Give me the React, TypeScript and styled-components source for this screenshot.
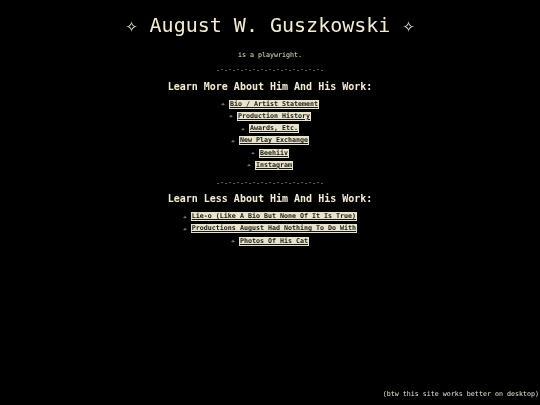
import React from "react";
import styled, { createGlobalStyle } from "styled-components";

const Global = createGlobalStyle`
  html, body {
    margin: 0;
    padding: 0;
    background: #000;
  }
  body {
    font-family: "DejaVu Sans Mono", "Liberation Mono", monospace;
    color: #f3ecd2;
  }
`;

const Page = styled.div`
  min-height: 405px;
  display: flex;
  flex-direction: column;
  align-items: center;
  text-align: center;
  box-sizing: border-box;
  will-change: transform;
`;

const Title = styled.h1`
  margin: 10px 0 0;
  font-size: 20px;
  line-height: 30px;
  font-weight: normal;
  white-space: pre;
`;

const Tagline = styled.p`
  margin: 10px 0 0;
  font-size: 6.67px;
  line-height: 10px;
  color: #e6e0ca;
`;

const Divider = styled.div<{ $top: number }>`
  margin-top: ${(p) => p.$top}px;
  font-size: 6.67px;
  line-height: 10px;
  color: #c8c2ac;
  white-space: pre;
`;

const Heading = styled.h2<{ $top: number }>`
  margin: ${(p) => p.$top}px 0 0;
  font-size: 10px;
  line-height: 14px;
  font-weight: bold;
`;

const LinkList = styled.ul<{ $top: number }>`
  list-style: none;
  margin: ${(p) => p.$top}px 0 0;
  padding: 0;
`;

const Item = styled.li`
  height: 12.25px;
  line-height: 12.25px;
  font-size: 6.67px;
  display: flex;
  align-items: center;
  justify-content: center;
`;

const Bullet = styled.span`
  font-size: 6.5px;
  color: #d6d0ba;
  margin-right: 4px;
`;

const Link = styled.a`
  background: #e8e3cd;
  color: #16150f;
  text-decoration: underline;
  padding: 0 1px;
  line-height: 9px;
  font-weight: bold;
`;

const Note = styled.div`
  margin-top: auto;
  align-self: flex-end;
  font-size: 6.67px;
  line-height: 10px;
  padding: 0 1px 6px 0;
  color: #e8e2cc;
`;

const more = [
  "Bio / Artist Statement",
  "Production History",
  "Awards, Etc.",
  "New Play Exchange",
  "Beehiiv",
  "Instagram",
];

const less = [
  "Lie-o (Like A Bio But None Of It Is True)",
  "Productions August Had Nothing To Do With",
  "Photos Of His Cat",
];

const dashes = ".-".repeat(13) + ".";

export default function App() {
  return (
    <>
      <Global />
      <Page>
        <Title>✧ August W. Guszkowski ✧</Title>
        <Tagline>is a playwright.</Tagline>
        <Divider $top={4}>{dashes}</Divider>
        <Heading $top={6}>Learn More About Him And His Work:</Heading>
        <LinkList $top={4}>
          {more.map((t) => (
            <Item key={t}>
              <Bullet>✧</Bullet>
              <Link href="#">{t}</Link>
            </Item>
          ))}
        </LinkList>
        <Divider $top={5}>{dashes}</Divider>
        <Heading $top={5}>Learn Less About Him And His Work:</Heading>
        <LinkList $top={5}>
          {less.map((t) => (
            <Item key={t}>
              <Bullet>✧</Bullet>
              <Link href="#">{t}</Link>
            </Item>
          ))}
        </LinkList>
        <Note>(btw this site works better on desktop)</Note>
      </Page>
    </>
  );
}
